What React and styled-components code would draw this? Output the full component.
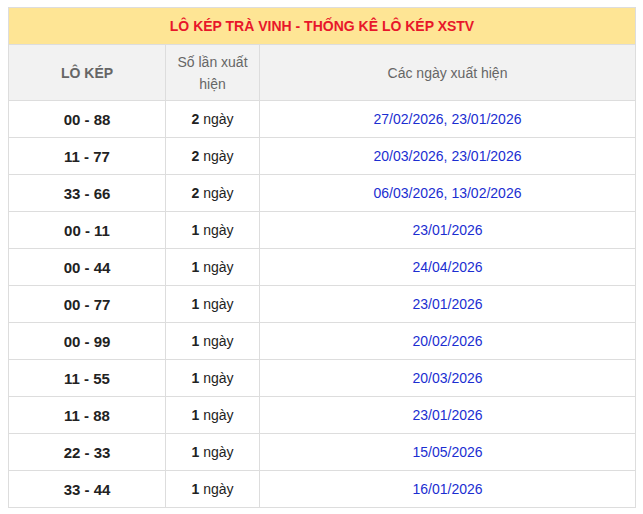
import React from "react";
import styled, { createGlobalStyle } from "styled-components";

const G = createGlobalStyle`body{margin:7px 7px 0 8px;font-family:"Liberation Sans",Arial,sans-serif;background:#fff;}`;
const Table = styled.table`width:628px;border-collapse:collapse;table-layout:fixed;font-size:14px;`;
const Title = styled.th`background:#fee595;color:#e8172a;font-weight:bold;height:36px;padding:0;border:1px solid #ddd;font-size:14px;`;
const Head = styled.th`background:#f2f2f2;color:#666;font-weight:${p=>p.$bold?"bold":"normal"};font-size:14px;line-height:22px;height:55px;padding:0 10px;border:1px solid #ddd;`;
const Td = styled.td`height:36px;padding:0;text-align:center;border:1px solid #ddd;color:${p=>p.$blue?"#1b2ed1":"#222"};font-weight:${p=>p.$bold?"bold":"normal"};font-size:${p=>p.$bold?"15px":"14px"};`;
const B = styled.b`color:#222;`;

const rows=[["00 - 88",2,"27/02/2026, 23/01/2026"],["11 - 77",2,"20/03/2026, 23/01/2026"],["33 - 66",2,"06/03/2026, 13/02/2026"],["00 - 11",1,"23/01/2026"],["00 - 44",1,"24/04/2026"],["00 - 77",1,"23/01/2026"],["00 - 99",1,"20/02/2026"],["11 - 55",1,"20/03/2026"],["11 - 88",1,"23/01/2026"],["22 - 33",1,"15/05/2026"],["33 - 44",1,"16/01/2026"]];

export default function App(){return(<><G/><Table><colgroup><col style={{width:157}}/><col style={{width:94}}/><col/></colgroup><thead><tr><Title colSpan={3}>LÔ KÉP TRÀ VINH - THỐNG KÊ LÔ KÉP XSTV</Title></tr><tr><Head $bold>LÔ KÉP</Head><Head>Số lần xuất hiện</Head><Head>Các ngày xuất hiện</Head></tr></thead><tbody>{rows.map(r=>(<tr key={r[0]}><Td $bold>{r[0]}</Td><Td><B>{r[1]}</B> ngày</Td><Td $blue>{r[2]}</Td></tr>))}</tbody></Table></>);}
